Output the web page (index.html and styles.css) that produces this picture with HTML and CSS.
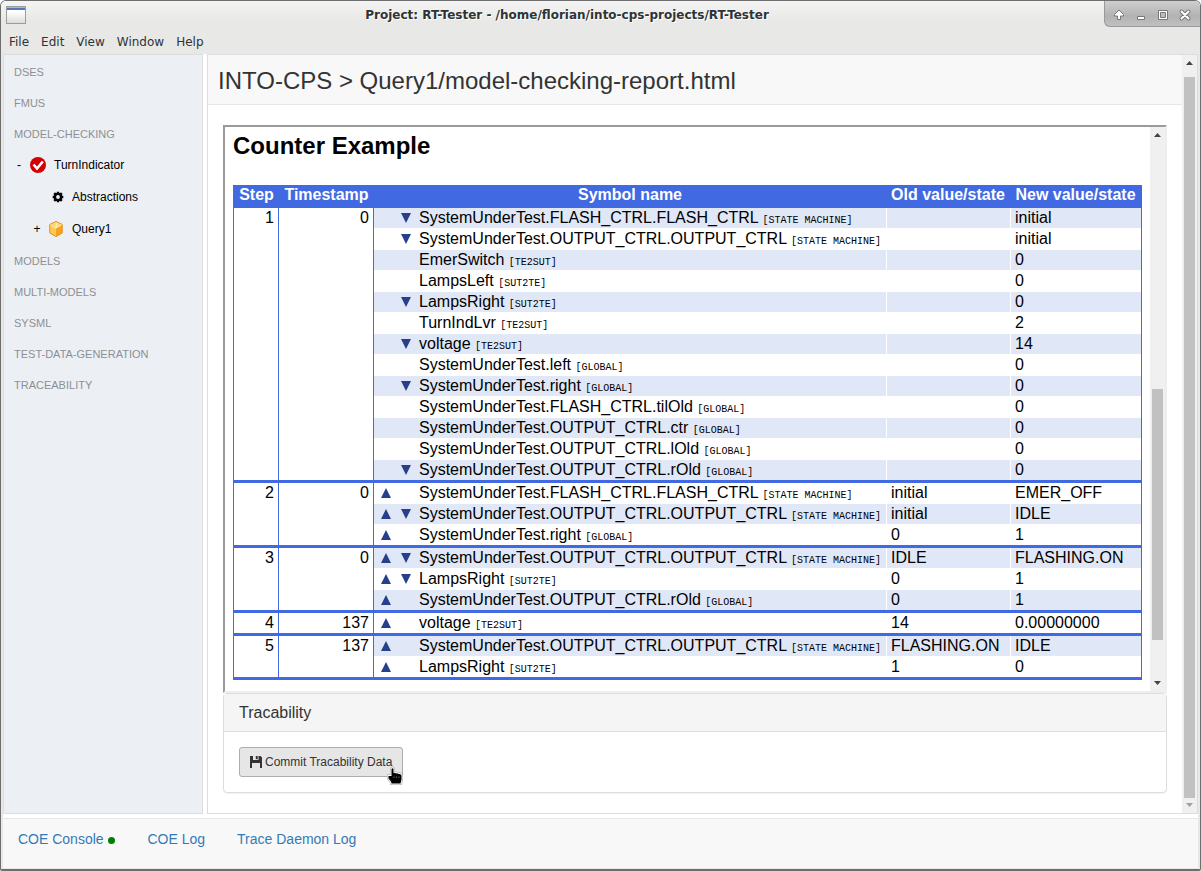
FILE: index.html
```
<!DOCTYPE html>
<html lang="en">
<head>
<meta charset="utf-8">
<title>Project: RT-Tester</title>
<link rel="stylesheet" href="styles.css">
</head>
<body>
<div class="window">
  <header class="titlebar">
    <svg class="app-icon" viewBox="0 0 20 18" width="20" height="18"><defs><linearGradient id="g" x2="0" y2="1"><stop offset="0.3" stop-color="#fff"/><stop offset="1" stop-color="#dcdcd8"/></linearGradient></defs><rect x=".5" y=".5" width="19" height="17" fill="url(#g)" stroke="#9c9c9c"/><path d="M1 1h18v3H1z" fill="#4f7ab8"/><path d="M1 1h18v1H1z" fill="#a9b9d0"/></svg>
    <h1 class="window-title">Project: RT-Tester - /home/florian/into-cps-projects/RT-Tester</h1>
    <div class="window-controls">
      <button class="control" aria-label="Shade"><svg viewBox="0 0 12 12" width="12" height="12"><path d="M6 1L1.500 5.500V7H4.500V10.500H7.500V7H10.500V5.500Z" fill="#fff" stroke="#777"/></svg></button>
      <button class="control" aria-label="Minimize"><svg viewBox="0 0 12 12" width="12" height="12"><path d="M2.500 7.500h7v3h-7z" fill="#fff" stroke="#777"/></svg></button>
      <button class="control" aria-label="Maximize"><svg viewBox="0 0 12 12" width="12" height="12"><path d="M1.500 1.500h9v9h-9z" fill="#fff" stroke="#777"/><path d="M3.500 3.500h5v5h-5z" fill="#bbb" stroke="#777"/></svg></button>
      <button class="control" aria-label="Close"><svg viewBox="0 0 12 12" width="12" height="12"><path d="M2.500 2.500l7 7M9.500 2.500l-7 7" stroke="#777" stroke-width="4" stroke-linecap="round"/><path d="M2.500 2.500l7 7M9.500 2.500l-7 7" stroke="#fff" stroke-width="2" stroke-linecap="round"/></svg></button>
    </div>
  </header>
  <nav class="menubar">
    <button>File</button><button>Edit</button><button>View</button><button>Window</button><button>Help</button>
  </nav>
  <div class="workspace">
    <aside class="sidebar">
      <h2 class="group">DSES</h2>
      <h2 class="group">FMUS</h2>
      <h2 class="group">MODEL-CHECKING</h2>
      <div class="node">
        <button class="toggle">-</button>
        <svg class="node-icon" viewBox="0 0 16 16" width="16" height="16"><circle cx="8" cy="8" r="8" fill="#d40000"/><path d="M3.500 7.500L7 11.500L12.800 4.500" fill="none" stroke="#fff" stroke-width="2.600"/></svg>
        <span>TurnIndicator</span>
      </div>
      <div class="node child">
        <span class="toggle"></span>
        <svg class="node-icon gear" viewBox="0 0 16 16" width="16" height="16"><circle cx="8" cy="8" r="3.100" fill="none" stroke="#000" stroke-width="2.400"/><path d="M8 2.700v2M8 11.300v2M2.700 8h2M11.300 8h2M4.200 4.200l1.500 1.500M10.300 10.300l1.500 1.500M4.200 11.800l1.500-1.500M10.300 5.700l1.500-1.500" stroke="#000" stroke-width="2.400"/></svg>
        <span>Abstractions</span>
      </div>
      <div class="node child">
        <button class="toggle">+</button>
        <svg class="node-icon" viewBox="0 0 16 16" width="16" height="16"><path d="M8 .5L14.200 3.500V12L8 15.500L1.800 12V3.500Z" fill="#f9b233" stroke="#d98a1a"/><path d="M8 1L13.800 3.800L8 7L2.200 3.800Z" fill="#ffd978"/><path d="M2.300 4L8 7V15L2.300 11.800Z" fill="#ffc94f"/><path d="M8 7V15L13.700 11.800V4Z" fill="#f5a31f"/><path d="M2.500 4.200L8 7.200L9 2M8 7L13.500 4" fill="none" stroke="#fff0b8"/></svg>
        <span>Query1</span>
      </div>
      <h2 class="group after-tree">MODELS</h2>
      <h2 class="group">MULTI-MODELS</h2>
      <h2 class="group">SYSML</h2>
      <h2 class="group">TEST-DATA-GENERATION</h2>
      <h2 class="group">TRACEABILITY</h2>
    </aside>
    <main class="main">
      <div class="page">
        <h2 class="page-title">INTO-CPS &gt; Query1/model-checking-report.html</h2>
        <div class="page-body">
          <section class="report">
            <div class="report-content">
              <h2>Counter Example</h2>
              <table>
                <colgroup><col class="c-step"><col class="c-time"><col><col class="c-old"><col class="c-new"></colgroup>
                <thead><tr><th>Step</th><th>Timestamp</th><th>Symbol name</th><th>Old value/state</th><th>New value/state</th></tr></thead>
                <tbody>
                  <tr class="odd"><td class="num" rowspan="13">1</td><td class="num" rowspan="13">0</td><td class="sym"><span class="marks"><i class="down"></i></span>SystemUnderTest.FLASH_CTRL.FLASH_CTRL <code>[STATE MACHINE]</code></td><td></td><td>initial</td></tr>
                  <tr><td class="sym"><span class="marks"><i class="down"></i></span>SystemUnderTest.OUTPUT_CTRL.OUTPUT_CTRL <code>[STATE MACHINE]</code></td><td></td><td>initial</td></tr>
                  <tr class="odd"><td class="sym"><span class="marks"></span>EmerSwitch <code>[TE2SUT]</code></td><td></td><td>0</td></tr>
                  <tr><td class="sym"><span class="marks"></span>LampsLeft <code>[SUT2TE]</code></td><td></td><td>0</td></tr>
                  <tr class="odd"><td class="sym"><span class="marks"><i class="down"></i></span>LampsRight <code>[SUT2TE]</code></td><td></td><td>0</td></tr>
                  <tr><td class="sym"><span class="marks"></span>TurnIndLvr <code>[TE2SUT]</code></td><td></td><td>2</td></tr>
                  <tr class="odd"><td class="sym"><span class="marks"><i class="down"></i></span>voltage <code>[TE2SUT]</code></td><td></td><td>14</td></tr>
                  <tr><td class="sym"><span class="marks"></span>SystemUnderTest.left <code>[GLOBAL]</code></td><td></td><td>0</td></tr>
                  <tr class="odd"><td class="sym"><span class="marks"><i class="down"></i></span>SystemUnderTest.right <code>[GLOBAL]</code></td><td></td><td>0</td></tr>
                  <tr><td class="sym"><span class="marks"></span>SystemUnderTest.FLASH_CTRL.tilOld <code>[GLOBAL]</code></td><td></td><td>0</td></tr>
                  <tr class="odd"><td class="sym"><span class="marks"></span>SystemUnderTest.OUTPUT_CTRL.ctr <code>[GLOBAL]</code></td><td></td><td>0</td></tr>
                  <tr><td class="sym"><span class="marks"></span>SystemUnderTest.OUTPUT_CTRL.lOld <code>[GLOBAL]</code></td><td></td><td>0</td></tr>
                  <tr class="odd"><td class="sym"><span class="marks"><i class="down"></i></span>SystemUnderTest.OUTPUT_CTRL.rOld <code>[GLOBAL]</code></td><td></td><td>0</td></tr>
                </tbody>
                <tbody>
                  <tr><td class="num" rowspan="3">2</td><td class="num" rowspan="3">0</td><td class="sym"><span class="marks"><i class="up"></i></span>SystemUnderTest.FLASH_CTRL.FLASH_CTRL <code>[STATE MACHINE]</code></td><td>initial</td><td>EMER_OFF</td></tr>
                  <tr class="odd"><td class="sym"><span class="marks"><i class="up"></i><i class="down"></i></span>SystemUnderTest.OUTPUT_CTRL.OUTPUT_CTRL <code>[STATE MACHINE]</code></td><td>initial</td><td>IDLE</td></tr>
                  <tr><td class="sym"><span class="marks"><i class="up"></i></span>SystemUnderTest.right <code>[GLOBAL]</code></td><td>0</td><td>1</td></tr>
                </tbody>
                <tbody>
                  <tr class="odd"><td class="num" rowspan="3">3</td><td class="num" rowspan="3">0</td><td class="sym"><span class="marks"><i class="up"></i><i class="down"></i></span>SystemUnderTest.OUTPUT_CTRL.OUTPUT_CTRL <code>[STATE MACHINE]</code></td><td>IDLE</td><td>FLASHING.ON</td></tr>
                  <tr><td class="sym"><span class="marks"><i class="up"></i><i class="down"></i></span>LampsRight <code>[SUT2TE]</code></td><td>0</td><td>1</td></tr>
                  <tr class="odd"><td class="sym"><span class="marks"><i class="up"></i></span>SystemUnderTest.OUTPUT_CTRL.rOld <code>[GLOBAL]</code></td><td>0</td><td>1</td></tr>
                </tbody>
                <tbody>
                  <tr><td class="num">4</td><td class="num">137</td><td class="sym"><span class="marks"><i class="up"></i></span>voltage <code>[TE2SUT]</code></td><td>14</td><td>0.00000000</td></tr>
                </tbody>
                <tbody>
                  <tr class="odd"><td class="num" rowspan="2">5</td><td class="num" rowspan="2">137</td><td class="sym"><span class="marks"><i class="up"></i></span>SystemUnderTest.OUTPUT_CTRL.OUTPUT_CTRL <code>[STATE MACHINE]</code></td><td>FLASHING.ON</td><td>IDLE</td></tr>
                  <tr><td class="sym"><span class="marks"><i class="up"></i></span>LampsRight <code>[SUT2TE]</code></td><td>1</td><td>0</td></tr>
                </tbody>
              </table>
            </div>
            <div class="scrollbar inner"><i class="arrow-up"></i><div class="track"><div class="thumb"></div></div><i class="arrow-down"></i></div>
          </section>
          <section class="panel">
            <h3>Tracability</h3>
            <div class="panel-body">
              <button class="commit"><svg viewBox="0 0 12 12" width="12" height="12"><path d="M0 0H3V4H8.500V0H10.500L12 1.500V12H10V7H2V12H0Z" fill="#333"/><path d="M5.800 0H7.700V3.200H5.800Z" fill="#333"/></svg>Commit Tracability Data
                <svg class="pointer" viewBox="0 0 16 18" width="16" height="18"><path d="M4.500 2Q5.500 .5 6.500 2V6Q8 5.500 9 6.500Q10.500 6 11.500 7Q14 6.500 14.500 8.500V12.500L13.500 16.500H4.500L4 14.500L1.500 11.500V9H4.500Z" fill="none" stroke="#999" stroke-width="3"/><path d="M4.500 2Q5.500 .5 6.500 2V6Q8 5.500 9 6.500Q10.500 6 11.500 7Q14 6.500 14.500 8.500V12.500L13.500 16.500H4.500L4 14.500L1.500 11.500V9H4.500Z" fill="#000" stroke="#fff" stroke-width="2"/><path d="M4.500 2Q5.500 .5 6.500 2V6Q8 5.500 9 6.500Q10.500 6 11.500 7Q14 6.500 14.500 8.500V12.500L13.500 16.500H4.500L4 14.500L1.500 11.500V9H4.500Z" fill="#000"/><path d="M7 9.500v1.500M9.500 9.500v1.500M12 9.500v1.500" stroke="#888" stroke-width=".7"/></svg>
              </button>
            </div>
          </section>
        </div>
      </div>
      <div class="scrollbar outer"><i class="arrow-up"></i><div class="track"><div class="thumb"></div></div><i class="arrow-down faded"></i></div>
    </main>
  </div>
  <footer class="footer">
    <a href="#coe">COE Console <i class="status"></i></a>
    <a href="#log">COE Log</a>
    <a href="#trace">Trace Daemon Log</a>
  </footer>
</div>
</body>
</html>
```
FILE: styles.css
```
* { box-sizing: border-box; }
body {
  margin: 0;
  background: #fff;
  font-family: "Liberation Sans", Arial, sans-serif;
  color: #333;
}
button { font: inherit; color: inherit; border: 0; background: none; padding: 0; }
h1, h2, h3 { margin: 0; font-weight: normal; }
svg { display: block; flex: none; overflow: visible; }

.window {
  min-height: 100vh;
  display: flex;
  flex-direction: column;
  border: 1px solid #6e6e6e;
  border-bottom-width: 2px;
  border-radius: 6px 6px 2px 2px;
  background: #e8e8e6;
  padding: 0 2px 1px;
  overflow: hidden;
}

.titlebar {
  display: flex;
  align-items: flex-start;
  height: 29px;
  margin: 0 -2px;
  padding-left: 5px;
  background: linear-gradient(#f4f4f4, #e8e8e6 20px);
}
.app-icon { margin-top: 5px; }
.window-title {
  flex: 1;
  margin-left: 4px;
  text-align: center;
  font: bold 12px/28px "DejaVu Sans", sans-serif;
  color: #2e3436;
  text-shadow: 1px 1px #fff;
}
.window-controls {
  display: flex;
  align-items: center;
  gap: 10px;
  height: 26px;
  padding: 2px 9px 0 8px;
  border: solid #999;
  border-width: 0 0 1px 1px;
  border-bottom-left-radius: 6px;
  background: linear-gradient(#cfcfcf, #b2b2b2 60%, #c0c0c0);
}

.menubar {
  display: flex;
  gap: 12px;
  height: 24px;
  padding: 0 6px;
  font: 12px/24px "DejaVu Sans", sans-serif;
  color: #2e3436;
}

.workspace {
  flex: 1;
  display: flex;
  gap: 4px;
  padding-bottom: 4px;
  background: #fff;
}
.sidebar {
  width: 200px;
  flex: none;
  padding: 2px 10px;
  border: 1px solid #dcdddf;
  background: #eceff4;
  color: #000;
  font-size: 12px;
}
.group { font-size: 11px; line-height: 31px; color: #8c8f94; }
.node { display: flex; align-items: center; height: 32px; padding-bottom: 2px; }
.toggle { width: 10px; margin-right: 6px; }
.child { padding-left: 18px; }
.node-icon { margin-right: 8px; }
.child .gear { margin-left: 2px; margin-right: 6px; }

.main {
  flex: 1;
  min-width: 0;
  display: flex;
  border: 1px solid #dcdddf;
  background: #fff;
}
.page { flex: 1; min-width: 0; }
.page-title {
  height: 50px;
  padding-left: 10px;
  border-bottom: 1px solid #e7e7e7;
  background: #f8f8f8;
  font-size: 24px;
  line-height: 51px;
}
.page-body { padding: 20px 15px; }

.scrollbar {
  width: 15px;
  flex: none;
  display: flex;
  flex-direction: column;
  align-items: center;
  background: #f0f0f0;
  padding: 6px 0;
}
.track { flex: 1; width: 11px; display: flex; flex-direction: column; }
.thumb { background: #c1c1c1; }
.arrow-up, .arrow-down { width: 7px; height: 4px; background: #444; }
.arrow-up { clip-path: polygon(50% 0, 100% 100%, 0 100%); }
.arrow-down { clip-path: polygon(0 0, 100% 0, 50% 100%); }
.faded { background: #a0a0a0; }
.outer .track { padding: 12px 0 5px; }
.outer .thumb { flex: 1; }
.inner .track { padding: 7px 0; }
.inner .track::before { content: ""; flex: 245; }
.inner .track::after { content: ""; flex: 34; }
.inner .thumb { flex: 251; }

.report {
  display: flex;
  border: 2px solid;
  border-color: #9a9a9a #eee #eee #9a9a9a;
  color: #000;
}
.report-content { flex: 1; min-width: 0; padding: 4px 8px 11px; }
.report-content h2 { font-size: 24px; line-height: 30px; font-weight: bold; margin-bottom: 24px; }

table {
  width: 100%;
  table-layout: fixed;
  border: solid #4169e1;
  border-width: 0 1px;
  border-collapse: separate;
  border-spacing: 0;
  font-size: 16px;
  line-height: 20px;
}
.c-step { width: 45px; }
.c-time { width: 95px; }
.c-old { width: 124px; }
.c-new { width: 131px; }
th { height: 23px; padding: 0 0 3px; background: #4169e1; color: #fff; white-space: nowrap; }
td {
  height: 21px;
  padding: 0 4px 0 5px;
  border-bottom: 1px solid #fff;
  box-shadow: inset 1px 0 #fff;
  vertical-align: top;
  white-space: nowrap;
}
.odd td { background: #e0e7f6; }
.odd td.num, td.num { background: #fff; text-align: right; border-right: 1px solid #4169e1; border-bottom: 3px solid #4169e1; }
td.sym { padding-left: 7px; box-shadow: none; }
tr:last-child td { height: 23px; border-bottom: 3px solid #4169e1; }
code { font: 10px/12px "Liberation Mono", monospace; }
.marks { display: inline-block; position: relative; width: 30px; height: 10px; margin-right: 8px; }
.marks i { position: absolute; top: 0; width: 10px; height: 10px; background: #27408b; }
.up { left: 0; clip-path: polygon(50% 0, 100% 100%, 0 100%); }
.down { right: 0; clip-path: polygon(0 0, 100% 0, 50% 100%); }

.panel { border: 1px solid #ddd; border-radius: 4px; box-shadow: 0 1px 1px rgba(0, 0, 0, 0.05); }
.panel h3 {
  padding: 0 15px;
  border-bottom: 1px solid #ddd;
  background: #f5f5f5;
  font-size: 16px;
  line-height: 37px;
}
.panel-body { padding: 15px; }
.commit {
  position: relative;
  display: flex;
  align-items: center;
  gap: 3px;
  height: 30px;
  padding: 0 10px;
  border: 1px solid #adadad;
  border-radius: 3px;
  background: #e6e6e6;
  font-size: 12px;
}
.pointer { position: absolute; right: -1px; bottom: -9px; }

.footer {
  display: flex;
  gap: 32px;
  height: 50px;
  padding: 0 15px;
  border-top: 1px solid #e7e7e7;
  background: #f8f8f8;
  font-size: 14px;
  line-height: 40px;
}
.footer a { color: #337ab7; text-decoration: none; }
.status { display: inline-block; width: 7px; height: 7px; margin-left: 1px; border-radius: 50%; background: #008000; }
```
